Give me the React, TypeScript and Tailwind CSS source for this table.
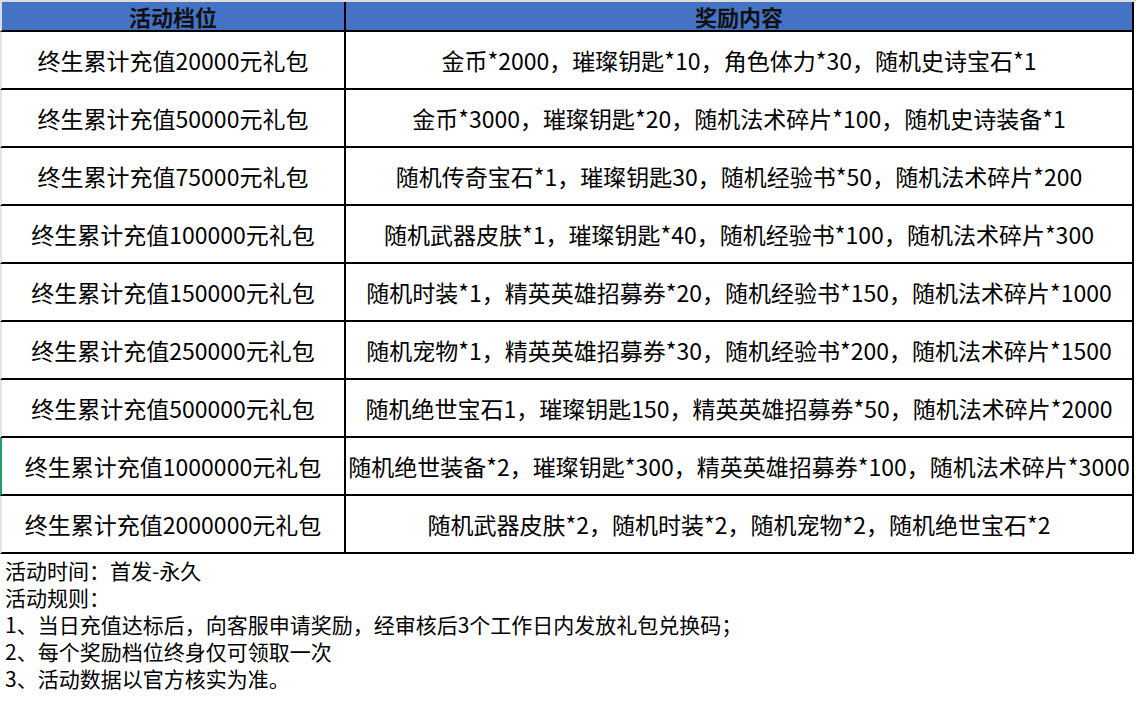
import React from "react";

const rows = [
  { tier: "终生累计充值20000元礼包", reward: "金币*2000，璀璨钥匙*10，角色体力*30，随机史诗宝石*1" },
  { tier: "终生累计充值50000元礼包", reward: "金币*3000，璀璨钥匙*20，随机法术碎片*100，随机史诗装备*1" },
  { tier: "终生累计充值75000元礼包", reward: "随机传奇宝石*1，璀璨钥匙30，随机经验书*50，随机法术碎片*200" },
  { tier: "终生累计充值100000元礼包", reward: "随机武器皮肤*1，璀璨钥匙*40，随机经验书*100，随机法术碎片*300" },
  { tier: "终生累计充值150000元礼包", reward: "随机时装*1，精英英雄招募券*20，随机经验书*150，随机法术碎片*1000" },
  { tier: "终生累计充值250000元礼包", reward: "随机宠物*1，精英英雄招募券*30，随机经验书*200，随机法术碎片*1500" },
  { tier: "终生累计充值500000元礼包", reward: "随机绝世宝石1，璀璨钥匙150，精英英雄招募券*50，随机法术碎片*2000" },
  { tier: "终生累计充值1000000元礼包", reward: "随机绝世装备*2，璀璨钥匙*300，精英英雄招募券*100，随机法术碎片*3000", active: true },
  { tier: "终生累计充值2000000元礼包", reward: "随机武器皮肤*2，随机时装*2，随机宠物*2，随机绝世宝石*2" },
];

const notes = [
  "活动时间：首发-永久",
  "活动规则：",
  "1、当日充值达标后，向客服申请奖励，经审核后3个工作日内发放礼包兑换码；",
  "2、每个奖励档位终身仅可领取一次",
  "3、活动数据以官方核实为准。",
];

export default function App() {
  return (
    <div
      className="w-[1136px] h-[712px] bg-white text-black overflow-hidden border-t-2 border-[#dcdcdc]"
      style={{ fontFamily: '"Noto Sans CJK SC", "Noto Sans", sans-serif' }}
    >
      {/* Table */}
      <div className="grid grid-cols-[346px_788px]">
        {/* Header */}
        <div className="h-[30px] bg-[#4472c4] border-l-2 border-l-[#dcdcdc] border-r-2 border-b-2 border-black flex items-center justify-center text-[22px] font-bold text-[#111] leading-none">
          活动档位
        </div>
        <div className="h-[30px] bg-[#4472c4] border-r-2 border-b-2 border-black flex items-center justify-center text-[22px] font-bold text-[#111] leading-none">
          奖励内容
        </div>

        {rows.map((r) => (
          <React.Fragment key={r.tier}>
            <div
              className={`h-[58px] border-l-2 border-r-2 border-b-2 border-r-black border-b-black flex items-center justify-center text-[23px] whitespace-nowrap ${
                r.active ? "border-l-[#1fa06a]" : "border-l-[#e4e4e4]"
              }`}
            >
              {r.tier}
            </div>
            <div className="h-[58px] border-r-2 border-b-2 border-black flex items-center justify-center text-[23px] whitespace-nowrap">
              {r.reward}
            </div>
          </React.Fragment>
        ))}
      </div>

      {/* Notes */}
      <div className="pt-[3px] pl-[5px] text-[21px] leading-[27px]">
        {notes.map((n) => (
          <div key={n} className="whitespace-nowrap">
            {n}
          </div>
        ))}
      </div>
    </div>
  );
}
